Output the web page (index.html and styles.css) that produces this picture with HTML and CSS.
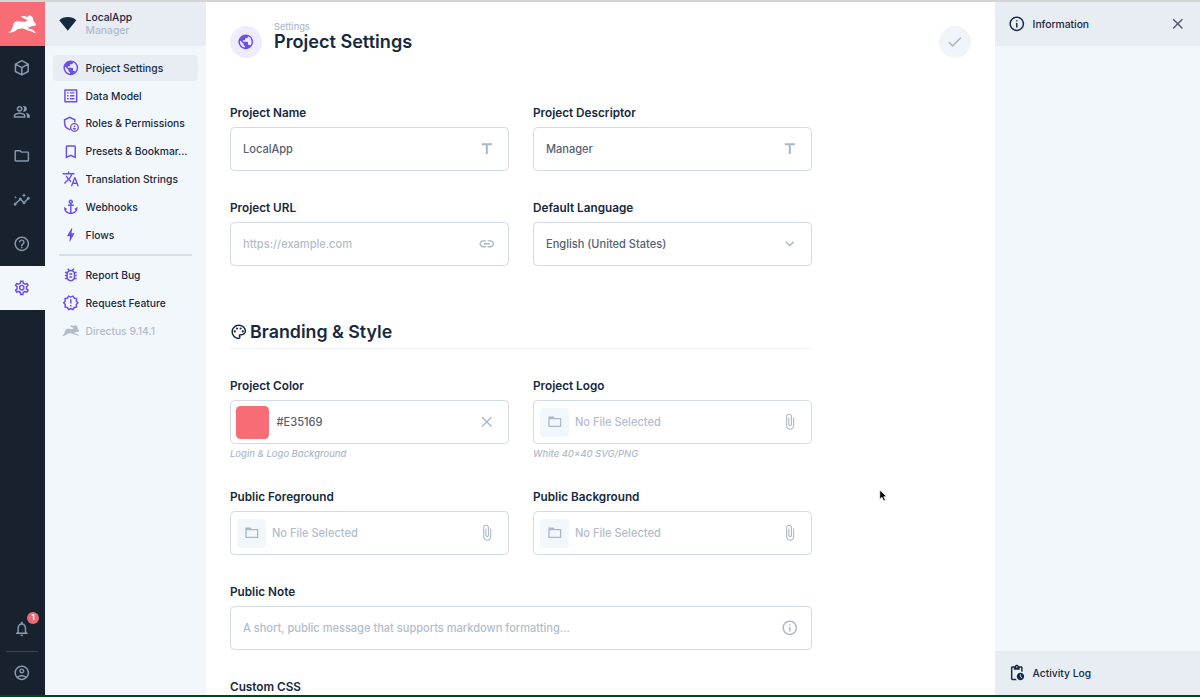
FILE: index.html
```html
<!DOCTYPE html>
<html lang="en">
<head>
<meta charset="utf-8">
<title>Project Settings</title>
<link rel="stylesheet" href="styles.css">
</head>
<body>
<svg class="sprite" aria-hidden="true">
  <symbol id="rabbit" viewBox="0 0 90 60"><path d="M2 53C7 52 10 48 13 40L17 27C19 22 25 20 34 20L53 22L61 16C52 13 43 8 40 4C47 2 55 3 61 7C61 3 66 1 70 2C77 4 80 10 79 17C80 22 88 25 88 31C87 35 80 35 75 35C70 39 64 40 59 41L68 44C74 43 80 47 84 53L87 58C82 57 78 54 75 52L62 49L48 43C42 41 36 44 29 45L21 51L7 56C4 57 0 55 2 53Z"/></symbol>
  <symbol id="public" viewBox="0 0 24 24"><path d="M12 2C6.480 2 2 6.480 2 12s4.480 10 10 10 10-4.480 10-10S17.520 2 12 2zm-1 17.930c-3.950-.49-7-3.850-7-7.930 0-.62.08-1.210.21-1.790L9 15v1c0 1.100.9 2 2 2v1.930zm6.900-2.540c-.26-.81-1-1.390-1.900-1.390h-1v-3c0-.55-.45-1-1-1H8v-2h2c.55 0 1-.45 1-1V7h2c1.100 0 2-.9 2-2v-.41c2.930 1.190 5 4.060 5 7.410 0 2.080-.8 3.970-2.100 5.390z"/></symbol>
  <symbol id="list" viewBox="0 0 24 24"><path d="M19 5v14H5V5h14m1.100-2H3.900c-.5 0-.9.4-.9.9v16.200c0 .4.4.9.9.9h16.200c.4 0 .9-.5.9-.9V3.900c0-.5-.5-.9-.9-.9zM11 7h6v2h-6V7zm0 4h6v2h-6v-2zm0 4h6v2h-6zM7 7h2v2H7zm0 4h2v2H7zm0 4h2v2H7z"/></symbol>
  <symbol id="admin" viewBox="0 0 24 24"><path d="M11.500 20.200C7 19 3.500 15.500 3.500 11V6.500L10.500 3.300L17.500 6.500V10" fill="none" stroke="currentColor" stroke-width="2"/><circle cx="17" cy="17" r="5.200" fill="none" stroke="currentColor" stroke-width="1.800"/><circle cx="17" cy="15.500" r="1.200"/><path d="M14.500 19c.5-1.600 4.500-1.600 5 0-1.300 1.500-3.700 1.500-5 0z"/></symbol>
  <symbol id="bookmark" viewBox="0 0 24 24"><path d="M17 3H7c-1.100 0-2 .9-2 2v16l7-3 7 3V5c0-1.100-.9-2-2-2zm0 15l-5-2.180L7 18V5h10v13z"/></symbol>
  <symbol id="translate" viewBox="0 0 24 24"><path d="M12.870 15.070l-2.540-2.510.03-.03c1.740-1.940 2.980-4.170 3.710-6.530H17V4h-7V2H8v2H1v1.990h11.170C11.500 7.920 10.440 9.750 9 11.350 8.070 10.320 7.300 9.190 6.690 8h-2c.73 1.630 1.730 3.170 2.980 4.560l-5.090 5.020L4 19l5-5 3.110 3.110.76-2.040zM18.500 10h-2L12 22h2l1.120-3h4.750L21 22h2l-4.500-12zm-2.620 7l1.620-4.330L19.120 17h-3.240z"/></symbol>
  <symbol id="anchor" viewBox="0 0 24 24"><path d="M17 15l1.550 1.550c-.96 1.690-3.330 3.040-5.550 3.370V11h3V9h-3V7.820C14.160 7.400 15 6.300 15 5c0-1.650-1.350-3-3-3S9 3.350 9 5c0 1.300.84 2.400 2 2.820V9H8v2h3v8.920c-2.220-.33-4.590-1.680-5.550-3.370L7 15l-4-3v3c0 3.880 4.920 7 9 7s9-3.120 9-7v-3l-4 3zM12 4c.55 0 1 .45 1 1s-.45 1-1 1-1-.45-1-1 .45-1 1-1z"/></symbol>
  <symbol id="bolt" viewBox="0 0 24 24"><path d="M11 21h-1l1-7H7.500c-.88 0-.33-.75-.31-.78C8.480 10.940 10.420 7.540 13.010 3h1l-1 7h3.510c.4 0 .62.190.4.660C12.970 17.550 11 21 11 21z"/></symbol>
  <symbol id="bug" viewBox="0 0 24 24"><path d="M20 8h-2.810c-.45-.78-1.070-1.450-1.820-1.960L17 4.410 15.590 3l-2.170 2.170C12.960 5.060 12.490 5 12 5s-.96.06-1.410.17L8.410 3 7 4.410l1.620 1.630C7.880 6.550 7.260 7.220 6.810 8H4v2h2.090c-.05.33-.09.66-.09 1v1H4v2h2v1c0 .34.04.67.09 1H4v2h2.810c1.040 1.790 2.970 3 5.190 3s4.150-1.210 5.190-3H20v-2h-2.090c.05-.33.09-.66.09-1v-1h2v-2h-2v-1c0-.34-.04-.67-.09-1H20V8zm-4 4v3c0 2.200-1.800 4-4 4s-4-1.800-4-4v-4c0-2.200 1.800-4 4-4s4 1.800 4 4v1zm-6 2h4v2h-4zm0-4h4v2h-4z"/></symbol>
  <symbol id="badge" viewBox="0 0 24 24"><path d="M23 12l-2.440-2.780.34-3.680-3.610-.82-1.890-3.180L12 3 8.600 1.540 6.710 4.720l-3.610.81.34 3.680L1 12l2.440 2.780-.34 3.690 3.610.82 1.890 3.180L12 21l3.400 1.460 1.890-3.180 3.610-.82-.34-3.680L23 12zm-4.510 2.110.26 2.790-2.740.62-1.430 2.410L12 18.820l-2.580 1.110-1.430-2.410-2.740-.62.26-2.800L3.660 12l1.850-2.120-.26-2.780 2.740-.61 1.430-2.410L12 5.180l2.580-1.110 1.430 2.410 2.740.62-.26 2.790L20.340 12l-1.850 2.110zM11 15h2v2h-2zm0-8h2v6h-2z"/></symbol>
  <symbol id="cube" viewBox="0 0 24 24"><path d="M12 2.300L20.700 6.900V17.100L12 21.700L3.300 17.100V6.900ZM3.300 7L12 11.700L20.700 7M12 11.700V21.500" fill="none" stroke="currentColor" stroke-width="2.100" stroke-linejoin="round"/></symbol>
  <symbol id="people" viewBox="0 0 24 24"><path d="M16.670 13.130C18.040 14.060 19 15.320 19 17v3h4v-3c0-2.180-3.570-3.470-6.330-3.870zM15 12c2.210 0 4-1.790 4-4s-1.790-4-4-4c-.47 0-.91.1-1.330.24C14.500 5.270 15 6.580 15 8s-.5 2.730-1.330 3.760c.42.140.86.240 1.330.24zM9 12c2.210 0 4-1.790 4-4s-1.790-4-4-4-4 1.790-4 4 1.790 4 4 4zm0-6c1.100 0 2 .9 2 2s-.9 2-2 2-2-.9-2-2 .9-2 2-2zm0 7c-2.670 0-8 1.340-8 4v3h16v-3c0-2.660-5.330-4-8-4zm6 5H3v-.99C3.200 16.290 6.300 15 9 15s5.800 1.290 6 2v1z"/></symbol>
  <symbol id="folder" viewBox="0 0 24 24"><path d="M9.170 6l2 2H20v10H4V6h5.170M10 4H4c-1.100 0-1.990.9-1.990 2L2 18c0 1.100.9 2 2 2h16c1.100 0 2-.9 2-2V8c0-1.100-.9-2-2-2h-8l-2-2z"/></symbol>
  <symbol id="folder-flat" viewBox="0 0 24 24"><path d="M2 4H10L12 6H22V20H2ZM4 8V18H20V8Z" fill-rule="evenodd"/></symbol>
  <symbol id="insights" viewBox="0 0 24 24"><path d="M21 8c-1.450 0-2.260 1.440-1.930 2.510l-3.550 3.560c-.3-.09-.74-.09-1.040 0l-2.550-2.550C12.270 10.450 11.460 9 10 9c-1.450 0-2.270 1.440-1.930 2.520l-4.560 4.550C2.440 15.740 1 16.550 1 18c0 1.100.9 2 2 2 1.450 0 2.260-1.440 1.930-2.510l4.550-4.560c.3.09.74.09 1.040 0l2.550 2.550C12.730 16.550 13.540 18 15 18c1.450 0 2.270-1.440 1.930-2.520l3.560-3.550C21.560 12.260 23 11.450 23 10c0-1.100-.9-2-2-2zM15 9l.94-2.070L18 6l-2.060-.93L15 3l-.92 2.070L12 6l2.080.93zM3.500 11L4 9l2-.5L4 8l-.5-2L3 8l-2 .5L3 9z"/></symbol>
  <symbol id="help" viewBox="0 0 24 24"><path d="M11 18h2v-2h-2v2zm1-16C6.480 2 2 6.480 2 12s4.480 10 10 10 10-4.480 10-10S17.520 2 12 2zm0 18c-4.410 0-8-3.590-8-8s3.590-8 8-8 8 3.590 8 8-3.590 8-8 8zm0-14c-2.210 0-4 1.790-4 4h2c0-1.100.9-2 2-2s2 .9 2 2c0 2-3 1.750-3 5h2c0-2.250 3-2.500 3-5 0-2.210-1.790-4-4-4z"/></symbol>
  <symbol id="gear" viewBox="0 0 24 24"><path d="M19.430 12.980c.04-.32.07-.64.07-.98 0-.34-.03-.66-.07-.98l2.110-1.650c.19-.15.24-.42.12-.64l-2-3.460c-.09-.16-.26-.25-.44-.25-.06 0-.12.01-.17.03l-2.490 1c-.52-.4-1.080-.73-1.690-.98l-.38-2.650C14.460 2.180 14.250 2 14 2h-4c-.25 0-.46.18-.49.42l-.38 2.650c-.61.25-1.170.59-1.690.98l-2.490-1c-.06-.02-.12-.03-.18-.03-.17 0-.34.09-.43.25l-2 3.460c-.13.22-.07.49.12.64l2.110 1.650c-.04.32-.07.65-.07.98 0 .33.03.66.07.98l-2.110 1.650c-.19.15-.24.42-.12.64l2 3.460c.09.16.26.25.44.25.06 0 .12-.01.17-.03l2.490-1c.52.4 1.080.73 1.690.98l.38 2.650c.03.24.24.42.49.42h4c.25 0 .46-.18.49-.42l.38-2.650c.61-.25 1.170-.59 1.690-.98l2.490 1c.06.02.12.03.18.03.17 0 .34-.09.43-.25l2-3.460c.12-.22.07-.49-.12-.64l-2.110-1.650zm-1.980-1.710c.04.31.05.52.05.73 0 .21-.02.43-.05.73l-.14 1.130.89.7 1.080.84-.7 1.210-1.270-.51-1.040-.42-.9.68c-.43.32-.84.56-1.250.73l-1.060.43-.16 1.130-.2 1.350h-1.400l-.19-1.350-.16-1.130-1.060-.43c-.43-.18-.83-.41-1.230-.71l-.91-.7-1.060.43-1.270.51-.7-1.210 1.080-.84.89-.7-.14-1.130c-.03-.31-.05-.54-.05-.74s.02-.43.05-.73l.14-1.130-.89-.7-1.080-.84.7-1.210 1.270.51 1.040.42.9-.68c.43-.32.84-.56 1.250-.73l1.060-.43.16-1.130.2-1.350h1.390l.19 1.350.16 1.130 1.060.43c.43.18.83.41 1.230.71l.91.7 1.060-.43 1.270-.51.7 1.210-1.070.85-.89.7.14 1.130zM12 8c-2.210 0-4 1.790-4 4s1.790 4 4 4 4-1.790 4-4-1.790-4-4-4zm0 6c-1.100 0-2-.9-2-2s.9-2 2-2 2 .9 2 2-.9 2-2 2z"/></symbol>
  <symbol id="bell" viewBox="0 0 24 24"><path d="M12 22c1.100 0 2-.9 2-2h-4c0 1.100.9 2 2 2zm6-6v-5c0-3.070-1.630-5.640-4.500-6.320V4c0-.83-.67-1.500-1.500-1.500s-1.500.67-1.500 1.500v.68C7.640 5.360 6 7.920 6 11v5l-2 2v1h16v-1l-2-2zm-2 1H8v-6c0-2.480 1.510-4.500 4-4.500s4 2.020 4 4.500v6z"/></symbol>
  <symbol id="account" viewBox="0 0 24 24"><path d="M12 2C6.480 2 2 6.480 2 12s4.480 10 10 10 10-4.480 10-10S17.520 2 12 2zM7.350 18.500C8.660 17.560 10.260 17 12 17s3.340.56 4.650 1.500C15.340 19.440 13.740 20 12 20s-3.340-.56-4.650-1.500zm10.790-1.380C16.450 15.800 14.320 15 12 15s-4.450.8-6.140 2.120C4.700 15.730 4 13.950 4 12c0-4.420 3.580-8 8-8s8 3.580 8 8c0 1.950-.7 3.730-1.860 5.120zM12 6c-1.930 0-3.500 1.570-3.500 3.500S10.070 13 12 13s3.500-1.570 3.500-3.500S13.930 6 12 6zm0 5c-.83 0-1.500-.67-1.500-1.500S11.170 8 12 8s1.500.67 1.500 1.500S12.830 11 12 11z"/></symbol>
  <symbol id="wedge" viewBox="0 0 24 24"><path d="M12 21.500L.4 7C3.500 4.200 7.500 2.800 12 2.800S20.500 4.200 23.600 7Z"/></symbol>
  <symbol id="title" viewBox="0 0 24 24"><path d="M5 4.500v2.700h5.600V19h2.800V7.200H19V4.500z"/></symbol>
  <symbol id="link" viewBox="0 0 24 24"><path d="M3.900 12c0-1.710 1.390-3.100 3.100-3.100h4V7H7c-2.760 0-5 2.240-5 5s2.240 5 5 5h4v-1.900H7c-1.710 0-3.100-1.390-3.100-3.100zM8 13h8v-2H8v2zm9-6h-4v1.900h4c1.710 0 3.100 1.390 3.100 3.100s-1.390 3.100-3.100 3.100h-4V17h4c2.760 0 5-2.240 5-5s-2.240-5-5-5z"/></symbol>
  <symbol id="more" viewBox="0 0 24 24"><path d="M16.590 8.590L12 13.170 7.410 8.590 6 10l6 6 6-6z"/></symbol>
  <symbol id="clip" viewBox="0 0 24 24"><path d="M16.500 6v11.500c0 2.210-1.790 4-4 4s-4-1.790-4-4V5c0-1.380 1.120-2.500 2.500-2.500s2.500 1.120 2.500 2.500v10.500c0 .55-.45 1-1 1s-1-.45-1-1V6H10v9.500c0 1.380 1.120 2.500 2.500 2.500s2.500-1.120 2.500-2.500V5c0-2.210-1.790-4-4-4S7 2.790 7 5v12.500c0 3.040 2.460 5.500 5.500 5.500s5.500-2.460 5.500-5.500V6h-1.500z"/></symbol>
  <symbol id="close" viewBox="0 0 24 24"><path d="M19 6.410L17.590 5 12 10.590 6.410 5 5 6.410 10.590 12 5 17.590 6.410 19 12 13.410 17.590 19 19 17.590 13.410 12z"/></symbol>
  <symbol id="check" viewBox="0 0 24 24"><path d="M9 16.170L4.830 12l-1.420 1.410L9 19 21 7l-1.410-1.410z"/></symbol>
  <symbol id="info" viewBox="0 0 24 24"><path d="M11 7h2v2h-2zm0 4h2v6h-2zm1-9C6.480 2 2 6.480 2 12s4.480 10 10 10 10-4.480 10-10S17.520 2 12 2zm0 18c-4.410 0-8-3.590-8-8s3.590-8 8-8 8 3.590 8 8-3.590 8-8 8z"/></symbol>
  <symbol id="palette" viewBox="0 0 24 24"><path d="M12 22C6.490 22 2 17.510 2 12S6.490 2 12 2s10 4.040 10 9c0 3.310-2.690 6-6 6h-1.770c-.28 0-.5.22-.5.5 0 .12.05.23.13.33.41.47.64 1.060.64 1.670A2.500 2.500 0 0 1 12 22zm0-18c-4.410 0-8 3.590-8 8s3.590 8 8 8c.28 0 .5-.22.5-.5a.54.54 0 0 0-.14-.35c-.41-.46-.63-1.050-.63-1.650a2.500 2.500 0 0 1 2.500-2.500H16c2.210 0 4-1.790 4-4 0-3.860-3.590-7-8-7z"/><circle cx="6.500" cy="11.500" r="1.500"/><circle cx="9.500" cy="7.500" r="1.500"/><circle cx="14.500" cy="7.500" r="1.500"/><circle cx="17.500" cy="11.500" r="1.500"/></symbol>
  <symbol id="pending" viewBox="0 0 24 24"><path d="M17 12c-2.760 0-5 2.240-5 5s2.240 5 5 5 5-2.240 5-5-2.240-5-5-5zm1.650 7.350L16.500 17.200V14h1v2.790l1.850 1.850-.7.710zM18 3h-3.180C14.400 1.840 13.300 1 12 1s-2.400.84-2.820 2H6c-1.100 0-2 .9-2 2v15c0 1.100.9 2 2 2h6.110c-.59-.57-1.070-1.250-1.420-2H6V5h2v3h8V5h2v5.080c.71.1 1.380.31 2 .6V5c0-1.100-.9-2-2-2zm-6 2c-.55 0-1-.45-1-1s.45-1 1-1 1 .45 1 1-.45 1-1 1z"/></symbol>
</svg>

<div class="app">
  <aside class="rail">
    <div class="logo"><svg class="logo-mark"><use href="#rabbit"/></svg></div>
    <a class="module"><svg class="icon"><use href="#cube"/></svg></a>
    <a class="module"><svg class="icon"><use href="#people"/></svg></a>
    <a class="module"><svg class="icon"><use href="#folder"/></svg></a>
    <a class="module"><svg class="icon"><use href="#insights"/></svg></a>
    <a class="module"><svg class="icon"><use href="#help"/></svg></a>
    <a class="module active"><svg class="icon"><use href="#gear"/></svg></a>
    <div class="rail-bottom">
      <a class="module bell"><svg class="icon"><use href="#bell"/></svg><span class="count">1</span></a>
      <a class="module account"><svg class="icon"><use href="#account"/></svg></a>
    </div>
  </aside>

  <nav class="nav">
    <header class="nav-head">
      <svg class="icon"><use href="#wedge"/></svg>
      <div><div class="app-name">LocalApp</div><div class="app-role">Manager</div></div>
    </header>
    <div class="nav-list">
      <a class="item current"><svg class="icon"><use href="#public"/></svg>Project Settings</a>
      <a class="item"><svg class="icon"><use href="#list"/></svg>Data Model</a>
      <a class="item"><svg class="icon"><use href="#admin"/></svg>Roles &amp; Permissions</a>
      <a class="item"><svg class="icon"><use href="#bookmark"/></svg>Presets &amp; Bookmar...</a>
      <a class="item"><svg class="icon"><use href="#translate"/></svg>Translation Strings</a>
      <a class="item"><svg class="icon"><use href="#anchor"/></svg>Webhooks</a>
      <a class="item"><svg class="icon"><use href="#bolt"/></svg>Flows</a>
      <div class="divider"></div>
      <a class="item"><svg class="icon"><use href="#bug"/></svg>Report Bug</a>
      <a class="item"><svg class="icon"><use href="#badge"/></svg>Request Feature</a>
      <a class="item version"><svg class="icon"><use href="#rabbit"/></svg>Directus 9.14.1</a>
    </div>
  </nav>

  <main class="main">
    <header class="page-head">
      <span class="round"><svg class="icon"><use href="#public"/></svg></span>
      <div class="titles"><div class="crumb">Settings</div><h1 class="page-title">Project Settings</h1></div>
      <span class="round save"><svg class="icon"><use href="#check"/></svg></span>
    </header>

    <form class="form">
      <div class="field"><label class="label">Project Name</label>
        <div class="input"><span class="value">LocalApp</span><svg class="icon"><use href="#title"/></svg></div></div>
      <div class="field"><label class="label">Project Descriptor</label>
        <div class="input"><span class="value">Manager</span><svg class="icon"><use href="#title"/></svg></div></div>
      <div class="field"><label class="label">Project URL</label>
        <div class="input"><span class="value hint">https://example.com</span><svg class="icon"><use href="#link"/></svg></div></div>
      <div class="field"><label class="label">Default Language</label>
        <div class="input"><span class="value">English (United States)</span><svg class="icon"><use href="#more"/></svg></div></div>

      <h2 class="section"><svg class="icon"><use href="#palette"/></svg>Branding &amp; Style</h2>

      <div class="field"><label class="label">Project Color</label>
        <div class="input color"><span class="swatch"></span><span class="value">#E35169</span><svg class="icon"><use href="#close"/></svg></div>
        <small class="note">Login &amp; Logo Background</small></div>
      <div class="field"><label class="label">Project Logo</label>
        <div class="input file"><span class="thumb"><svg class="icon"><use href="#folder-flat"/></svg></span><span class="value hint">No File Selected</span><svg class="icon"><use href="#clip"/></svg></div>
        <small class="note">White 40×40 SVG/PNG</small></div>
      <div class="field"><label class="label">Public Foreground</label>
        <div class="input file"><span class="thumb"><svg class="icon"><use href="#folder-flat"/></svg></span><span class="value hint">No File Selected</span><svg class="icon"><use href="#clip"/></svg></div></div>
      <div class="field"><label class="label">Public Background</label>
        <div class="input file"><span class="thumb"><svg class="icon"><use href="#folder-flat"/></svg></span><span class="value hint">No File Selected</span><svg class="icon"><use href="#clip"/></svg></div></div>
      <div class="field wide"><label class="label">Public Note</label>
        <div class="input"><span class="value hint">A short, public message that supports markdown formatting...</span><svg class="icon"><use href="#info"/></svg></div></div>
      <div class="field wide"><label class="label">Custom CSS</label></div>
    </form>
  </main>

  <aside class="side">
    <header class="side-row"><svg class="icon"><use href="#info"/></svg><span class="side-title">Information</span><svg class="icon dismiss"><use href="#close"/></svg></header>
    <footer class="side-row"><svg class="icon"><use href="#pending"/></svg><span class="side-title">Activity Log</span></footer>
  </aside>
</div>
<svg class="cursor" viewBox="0 0 12 18"><path d="M1 1V13.500L4 10.800L6.200 15.800L8.600 14.700L6.400 9.900H10.300Z"/></svg>
</body>
</html>
```
FILE: styles.css
```css
* { box-sizing: border-box; }
body { margin: 0; height: 697px; overflow: hidden; background: #fff; color: #172940; font: 500 10.300px/14px Inter, sans-serif; }
.sprite { display: none; }
.icon { width: 17.6px; height: 17.6px; flex: none; fill: currentColor; }

.app { display: flex; height: 697px; border-top: 2px solid #d5d5d6; border-bottom: 2px solid #00490f; overflow: hidden; }

.rail { width: 44.500px; flex: none; display: flex; flex-direction: column; background: #18222f; color: #8799af; }
.logo { height: 44px; flex: none; display: flex; align-items: center; justify-content: center; background: #f76c75; color: #fff; }
.logo-mark { width: 29px; height: 19px; fill: currentColor; }
.module { height: 44px; flex: none; display: flex; align-items: center; justify-content: center; position: relative; }
.module.active { background: #f2f7fc; color: #6a4fec; }
.rail-bottom { margin-top: auto; }
.account::before { content: ""; position: absolute; top: -0.500px; left: 6px; width: 32px; height: 1.500px; background: #36455a; }
.count { position: absolute; top: 5px; left: 27px; width: 12px; height: 12px; border-radius: 50%; background: #e86a75; color: #fff; font-size: 7.500px; line-height: 12px; font-weight: 700; text-align: center; }

.nav { width: 161.500px; flex: none; background: #f2f7fc; }
.nav-head { height: 44px; padding-left: 14.500px; display: flex; align-items: center; gap: 9px; background: #e8edf4; }
.app-name, .app-role { line-height: 12.500px; }
.app-name { margin-top: -1px; }
.app-role { color: #afbaca; }
.nav-list { padding: 8.500px 8.500px 0; display: flex; flex-direction: column; gap: 1.500px; }
.item { height: 26.400px; padding-left: 9px; display: flex; align-items: center; gap: 6px; border-radius: 4px; white-space: nowrap; }
.item .icon { color: #6a4fec; }
.item.current { background: #e8edf4; }
.item.version, .item.version .icon { color: #b0bccb; }
.divider { height: 1.500px; margin: 4.500px 6px; background: #d6dee8; }

.main { width: 789px; flex: none; padding: 24px 24px 0; }
.page-head { height: 32px; display: flex; align-items: center; gap: 12px; }
.round { width: 32px; height: 32px; flex: none; border-radius: 50%; display: flex; align-items: center; justify-content: center; background: #f0ecff; color: #6a4fec; }
.round.save { margin-left: auto; background: #f0f5fa; color: #a9b8ca; }
.titles { margin-top: -11px; }
.crumb { color: #afbaca; font-size: 9.200px; line-height: 11px; }
.page-title { margin: -1px 0 0; padding-bottom: 1px; font-size: 18.100px; line-height: 20px; font-weight: 600; }

.form { margin-top: 47px; width: 582px; display: grid; grid-template-columns: 279px 279px; column-gap: 24px; row-gap: 29px; }
.field { display: flex; flex-direction: column; }
.wide, .section { grid-column: 1 / 3; }
.label { padding-top: 1px; margin-bottom: 6px; font-size: 11.750px; line-height: 15px; font-weight: 600; }
.input { height: 44px; padding: 0 12.500px 0 12px; display: flex; align-items: center; border: 1.500px solid #d3dbe6; border-radius: 4.500px; color: #a9b8ca; }
.value { flex: 1; color: #566172; font-size: 11.050px; }
.hint { color: #b2bdcc; }
.section { margin: 26px 0 0; padding-bottom: 5px; display: flex; align-items: center; gap: 2.500px; border-bottom: 1px solid #f0f4f9; font-size: 17.800px; line-height: 22px; font-weight: 600; }
.input.color { padding-left: 4.500px; }
.swatch { width: 33px; height: 33px; margin-right: 8px; border-radius: 4.500px; background: #f76c75; }
.input.file { padding-left: 6px; }
.thumb { width: 29px; height: 29px; margin-right: 6px; border-radius: 4px; display: flex; align-items: center; justify-content: center; background: #f2f7fc; }
.thumb .icon { height: 15.500px; }
.note { height: 14px; margin: 3px 0 -1px; color: #afbaca; font-size: 9.450px; line-height: 14px; font-style: italic; }

.side { flex: 1; display: flex; flex-direction: column; justify-content: space-between; background: #f2f7fc; }
.side-row { height: 44px; padding: 0 13px; display: flex; align-items: center; gap: 7px; background: #e8edf4; }
.dismiss { margin-left: auto; color: #4f5b6e; }

.cursor { position: absolute; left: 879px; top: 489px; width: 9px; height: 14px; overflow: visible; fill: #000; stroke: #fff; stroke-width: 1; }
```
